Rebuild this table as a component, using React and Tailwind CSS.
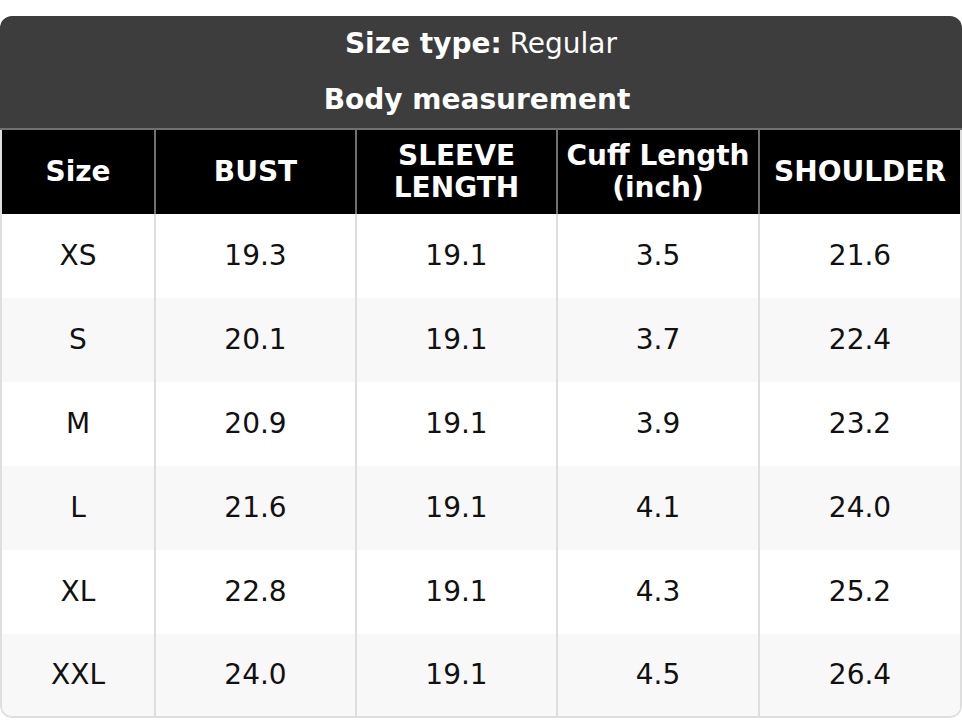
import React from 'react';

const columns = [
  { label: 'Size' },
  { label: 'BUST' },
  { label: ['SLEEVE', 'LENGTH'] },
  { label: ['Cuff Length', '(inch)'] },
  { label: 'SHOULDER' },
];

const rows = [
  ['XS', '19.3', '19.1', '3.5', '21.6'],
  ['S', '20.1', '19.1', '3.7', '22.4'],
  ['M', '20.9', '19.1', '3.9', '23.2'],
  ['L', '21.6', '19.1', '4.1', '24.0'],
  ['XL', '22.8', '19.1', '4.3', '25.2'],
  ['XXL', '24.0', '19.1', '4.5', '26.4'],
];

const gridCols = 'grid grid-cols-[152px_201px_201px_202px_202px]';

function App() {
  return (
    <div className="bg-white min-h-[720px] pt-4 font-['DejaVu_Sans',sans-serif] text-[28px]">
      <div className="w-[962px] rounded-[12px] overflow-hidden">
        <div className="bg-[#3d3d3d] text-white border-b-2 border-[#707070]">
          <div className="h-[56px] flex items-center justify-center">
            <span className="font-bold">Size type:</span>
            <span className="ml-2">Regular</span>
          </div>
          <div className="h-[56px] flex items-center justify-center font-bold pr-[8px]">Body measurement</div>
        </div>
        <div className="border-x-2 border-b-2 border-[#dedede] rounded-b-[12px] overflow-hidden">
          <div className={`${gridCols} bg-black text-white font-bold h-[84px] -mx-[2px] px-[2px] bg-clip-padding`}>
            {columns.map((col, i) => (
              <div
                key={i}
                className={`flex flex-col items-center justify-center text-center leading-[32px] ${i > 0 ? 'border-l-2 border-[#707070]' : ''}`}
              >
                {Array.isArray(col.label)
                  ? col.label.map((line) => <span key={line}>{line}</span>)
                  : col.label}
              </div>
            ))}
          </div>
          {rows.map((row, r) => (
            <div
              key={r}
              className={`${gridCols} text-[#111] ${r % 2 === 1 ? 'bg-[#f8f8f8]' : 'bg-white'} ${r === rows.length - 1 ? 'h-[82px]' : 'h-[84px]'}`}
            >
              {row.map((cell, i) => (
                <div
                  key={i}
                  className={`flex items-center justify-center ${i > 0 ? 'border-l-2 border-[#dedede]' : ''}`}
                >
                  {cell}
                </div>
              ))}
            </div>
          ))}
        </div>
      </div>
    </div>
  );
}

export default App;
